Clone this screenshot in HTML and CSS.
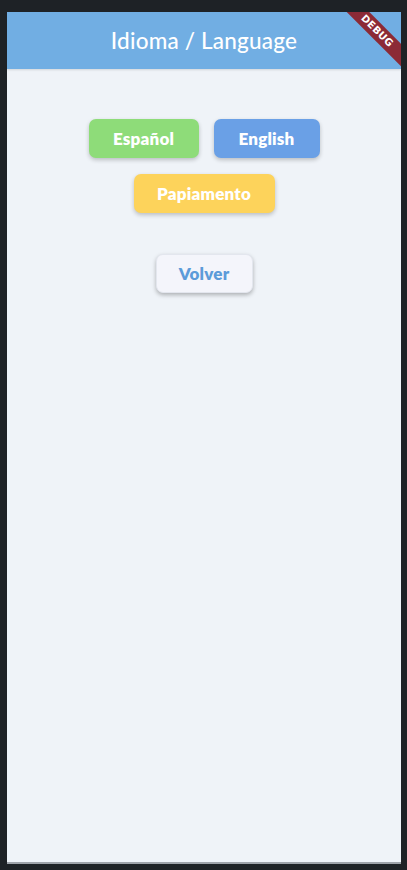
FILE: index.html
```html
<!DOCTYPE html>
<html lang="es">
<head>
<meta charset="utf-8">
<title>Idioma / Language</title>
<link rel="stylesheet" href="styles.css">
</head>
<body>
<div class="screen">
  <header class="appbar">
    <h1 class="title">Idioma / Language</h1>
    <div class="debug">DEBUG</div>
  </header>
  <main class="content">
    <div class="row">
      <button class="btn btn-green">Español</button>
      <button class="btn btn-blue">English</button>
    </div>
    <div class="row">
      <button class="btn btn-yellow">Papiamento</button>
    </div>
    <div class="row row-back">
      <button class="btn btn-back">Volver</button>
    </div>
  </main>
</div>
</body>
</html>
```
FILE: styles.css
```css
html, body {
  margin: 0;
  padding: 0;
  background: #1e2226;
  height: 870px;
  overflow: hidden;
}
.screen {
  position: relative;
  margin: 12px 6px 0 7px;
  width: 394px;
  height: 852px;
  background: #eff3f8;
  border-bottom: 2px solid #9ea3aa;
  box-sizing: border-box;
  overflow: hidden;
  display: flex;
  flex-direction: column;
}
.appbar {
  height: 57px;
  background: #71aee3;
  display: flex;
  align-items: center;
  justify-content: center;
  box-shadow: 0 1px 2px rgba(0,0,0,0.12);
  flex-shrink: 0;
}
.title {
  margin: 0;
  font-family: "Lato", "Noto Sans", sans-serif;
  font-weight: 500;
  font-size: 22.5px;
  color: #ffffff;
  letter-spacing: 0.2px;
}
.debug {
  position: absolute;
  top: 11px;
  right: -28px;
  width: 104px;
  height: 16px;
  background: #8c2a36;
  color: #fff;
  font-family: "DejaVu Sans", sans-serif;
  font-weight: bold;
  font-size: 10px;
  line-height: 16px;
  text-align: center;
  transform: rotate(45deg);
  letter-spacing: 0.3px;
}
.content {
  padding-top: 50px;
  display: flex;
  flex-direction: column;
  align-items: center;
  gap: 16px;
}
.row {
  display: flex;
  justify-content: center;
  gap: 15px;
}
.row-back {
  margin-top: 25px;
}
.btn {
  height: 39px;
  border: none;
  border-radius: 7px;
  font-family: "Lato", "Noto Sans", sans-serif;
  font-weight: 800;
  font-size: 17px;
  color: #ffffff;
  padding: 0;
  letter-spacing: 0.2px;
  box-shadow: 0 2px 4px rgba(0,0,0,0.22);
}
.btn-green { background: #8edc79; width: 110px; }
.btn-blue { background: #6aa0e6; width: 106px; }
.btn-yellow { background: #fdd35b; width: 141px; }
.btn-back {
  background: #f4f5fb;
  color: #5b9bd9;
  width: 97px;
  box-shadow: 0 2px 4px rgba(0,0,0,0.28);
  border: 1px solid #e3e6ee;
}
```
